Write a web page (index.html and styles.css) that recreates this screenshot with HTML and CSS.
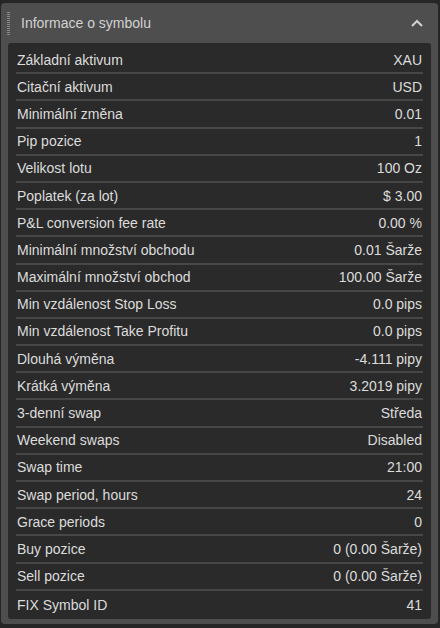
FILE: index.html
```html
<!DOCTYPE html>
<html>
<head>
<meta charset="utf-8">
<link rel="stylesheet" href="styles.css">
</head>
<body>
<div class="panel">
  <div class="header">
    <span class="grip"></span>
    <span class="title">Informace o symbolu</span>
    <svg class="chev" width="12" height="8" viewBox="0 0 12 8"><path d="M1 7 L6 2 L11 7" fill="none" stroke="#cfcfcf" stroke-width="2.2"/></svg>
  </div>
  <div class="content">
    <div class="row"><span>Základní aktivum</span><span class="v">XAU</span></div>
    <div class="row"><span>Citační aktivum</span><span class="v">USD</span></div>
    <div class="row"><span>Minimální změna</span><span class="v">0.01</span></div>
    <div class="row"><span>Pip pozice</span><span class="v">1</span></div>
    <div class="row"><span>Velikost lotu</span><span class="v">100 Oz</span></div>
    <div class="row"><span>Poplatek (za lot)</span><span class="v">$ 3.00</span></div>
    <div class="row"><span>P&amp;L conversion fee rate</span><span class="v">0.00 %</span></div>
    <div class="row"><span>Minimální množství obchodu</span><span class="v">0.01 Šarže</span></div>
    <div class="row"><span>Maximální množství obchod</span><span class="v">100.00 Šarže</span></div>
    <div class="row"><span>Min vzdálenost Stop Loss</span><span class="v">0.0 pips</span></div>
    <div class="row"><span>Min vzdálenost Take Profitu</span><span class="v">0.0 pips</span></div>
    <div class="row"><span>Dlouhá výměna</span><span class="v">-4.111 pipy</span></div>
    <div class="row"><span>Krátká výměna</span><span class="v">3.2019 pipy</span></div>
    <div class="row"><span>3-denní swap</span><span class="v">Středa</span></div>
    <div class="row"><span>Weekend swaps</span><span class="v">Disabled</span></div>
    <div class="row"><span>Swap time</span><span class="v">21:00</span></div>
    <div class="row"><span>Swap period, hours</span><span class="v">24</span></div>
    <div class="row"><span>Grace periods</span><span class="v">0</span></div>
    <div class="row"><span>Buy pozice</span><span class="v">0 (0.00 Šarže)</span></div>
    <div class="row"><span>Sell pozice</span><span class="v">0 (0.00 Šarže)</span></div>
    <div class="row last"><span>FIX Symbol ID</span><span class="v">41</span></div>
  </div>
</div>
</body>
</html>
```

FILE: styles.css
```css
html, body {
  margin: 0;
  background: #262626;
}
body {
  padding: 3px 2px 4px 1px;
  font-family: "Liberation Sans", Arial, sans-serif;
}
.panel {
  background: #4e4e4e;
  border-radius: 4px;
  padding-bottom: 5px;
}
.header {
  height: 40px;
  display: flex;
  align-items: center;
  position: relative;
}
.grip {
  width: 3px;
  height: 23px;
  margin-left: 6px;
  margin-right: 11px;
  background: repeating-linear-gradient(to bottom, #8a8a8a 0 1px, transparent 1px 2px);
}
.title {
  color: #d2d2d2;
  font-size: 14px;
  flex: 1;
}
.chev {
  margin-right: 15px;
}
.content {
  margin: 0 7px;
  background: #2a2a2a;
  border-radius: 3px;
  padding: 4px 8px 0px;
}
.row {
  height: 25.2px;
  border-bottom: 2px solid #474747;
  display: flex;
  justify-content: space-between;
  align-items: center;
  color: #dcdcdc;
  font-size: 14px;
}
.row span:first-child { padding-left: 1px; }
.row .v { padding-right: 1px; }
.row.last {
  border-bottom: none;
  height: 28px;
}
```
